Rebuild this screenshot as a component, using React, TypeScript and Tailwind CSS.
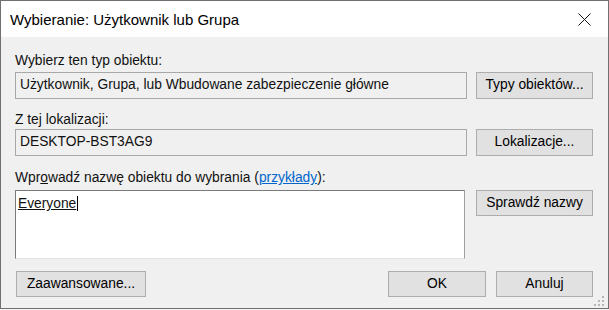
import React from 'react';

const font = { fontFamily: '"Liberation Sans", Arial, sans-serif' };

function Btn({ label, className = '' }: { label: string; className?: string }) {
  return (
    <div
      className={`h-[26px] flex items-center justify-center bg-[#e1e1e1] border border-[#adadad] text-[13.8px] text-black ${className}`}
    >
      {label}
    </div>
  );
}

export default function App() {
  return (
    <div className="w-[609px] h-[310px] bg-[#f4f4f4]" style={font}>
      <div className="relative w-[609px] h-[309px] border border-[#707070] bg-[#f0f0f0] flex flex-col">
        {/* title bar */}
        <div className="h-[36px] bg-white flex items-center justify-between pl-[9px] pr-[17px]">
          <span className="text-[15px] text-black pt-[2px]">Wybieranie: Użytkownik lub Grupa</span>
          <svg width="13" height="13" viewBox="0 0 13 13" className="mt-[1px]">
            <path d="M0.5 0.5 L12.5 12.5 M12.5 0.5 L0.5 12.5" stroke="#111" strokeWidth="1" />
          </svg>
        </div>

        {/* body */}
        <div className="flex-1 flex flex-col pl-[14px] pr-[15px] text-[13.8px] text-[#111]">
          <div className="mt-[16px] h-[16px] leading-[16px]">Wybierz ten typ obiektu:</div>
          <div className="mt-[3px] flex gap-[9px]">
            <div className="w-[452px] h-[27px] border border-[#a8a8a8] bg-[#f0f0f0] flex items-center pl-[4px]">
              Użytkownik, Grupa, lub Wbudowane zabezpieczenie główne
            </div>
            <Btn label="Typy obiektów..." className="w-[117px] h-[27px]" />
          </div>

          <div className="mt-[13px] h-[16px] leading-[16px]">Z tej lokalizacji:</div>
          <div className="mt-[1px] flex gap-[9px]">
            <div className="w-[452px] h-[27px] border border-[#a8a8a8] bg-[#f0f0f0] flex items-center pl-[4px]">
              DESKTOP-BST3AG9
            </div>
            <Btn label="Lokalizacje..." className="w-[117px] h-[27px]" />
          </div>

          <div className="mt-[14px] h-[16px] leading-[16px]">
            Wpr<span className="underline">o</span>wadź nazwę obiektu do wybrania (
            <span className="text-[#0066cc] underline">przykłady</span>):
          </div>
          <div className="mt-[4px] flex gap-[11px] items-start">
            <div className="w-[450px] h-[69px] bg-white border-t border-l border-t-[#7a7a7a] border-l-[#7a7a7a] border-r border-b border-r-[#a0a0a0] border-b-[#e3e3e3] pl-[2px] pt-[3px]">
              <span className="underline">Everyone</span>
              <span className="inline-block w-[1px] h-[15px] bg-black align-[-3px] ml-[1px]" />
            </div>
            <Btn label="Sprawdź nazwy" className="w-[117px]" />
          </div>

          <div className="mt-[12px] flex items-center">
            <Btn label="Zaawansowane..." className="ml-[1px] w-[130px]" />
            <div className="flex-1" />
            <Btn label="OK" className="w-[98px]" />
            <Btn label="Anuluj" className="ml-[10px] w-[97px]" />
          </div>
        </div>

        {/* size grip */}
        <div className="absolute right-[4px] bottom-[2px] grid grid-cols-3 gap-[2px]">
          <span />
          <span />
          <span className="w-[2px] h-[2px] bg-[#b5b5b5]" />
          <span />
          <span className="w-[2px] h-[2px] bg-[#b5b5b5]" />
          <span className="w-[2px] h-[2px] bg-[#b5b5b5]" />
          <span className="w-[2px] h-[2px] bg-[#b5b5b5]" />
          <span className="w-[2px] h-[2px] bg-[#b5b5b5]" />
          <span className="w-[2px] h-[2px] bg-[#b5b5b5]" />
        </div>
      </div>
    </div>
  );
}
